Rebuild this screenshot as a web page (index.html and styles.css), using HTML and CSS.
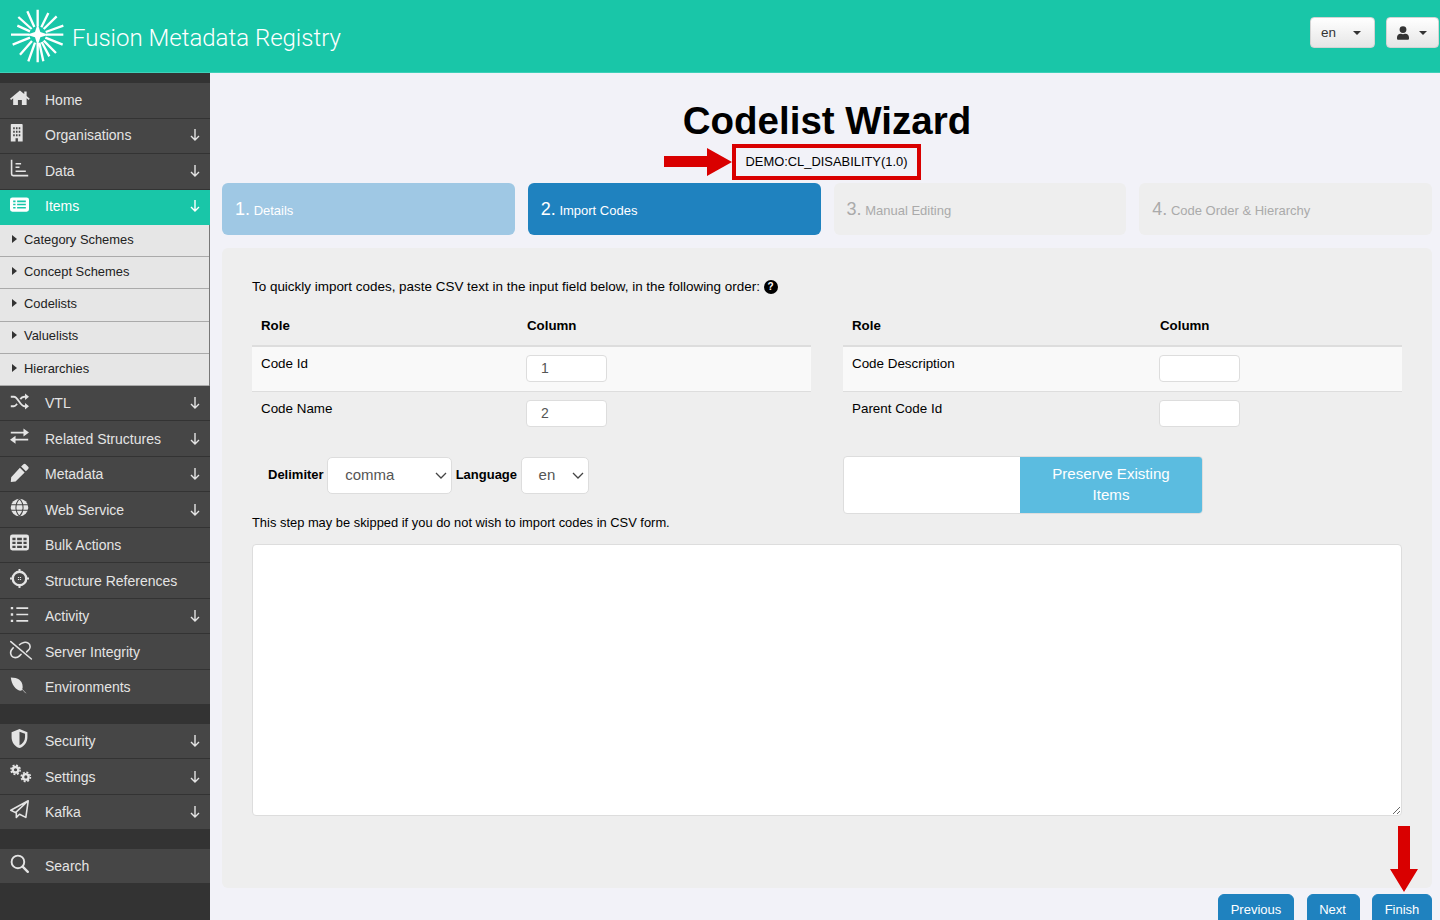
FILE: index.html
```html
<!DOCTYPE html>
<html lang="en">
<head>
<meta charset="utf-8">
<title>Fusion Metadata Registry</title>
<link rel="stylesheet" href="styles.css">
</head>
<body>
<header class="topbar">
  <svg class="logo" viewBox="30 28 165 165" fill="none" stroke="#fff" stroke-width="7">
    <path d="M113 80 113 30M124 83 145 40M131 88 170 50M137 97 190 78M138 105 190 105M136 114 188 135M131 123 168 160M125 127 148 170M118 129 130 185M113 130 113 188M105 129 85 185M96 124 60 165M90 114 38 135M88 105 33 105M90 95 52 78M95 88 55 52M103 82 82 35"/>
    <path d="M113 72 121 97 146 105 121 113 113 138 105 113 80 105 105 97Z" fill="#fff" stroke="none"/>
  </svg>
  <span class="brand">Fusion Metadata Registry</span>
  <div class="top-actions">
    <button class="top-btn lang">en<i class="caret"></i></button>
    <button class="top-btn user">
      <svg class="user-ico" viewBox="0 0 448 512"><path fill="#333" d="M224 256a128 128 0 1 0 0-256 128 128 0 0 0 0 256zm90 32h-17a174 174 0 0 1-146 0h-17C60 288 0 348 0 422v42c0 26 22 48 48 48h352c26 0 48-22 48-48v-42c0-74-60-134-134-134z"/></svg><i class="caret"></i>
    </button>
  </div>
</header>
<div class="layout">
  <nav class="sidebar">
    <a class="nav-row"><svg class="ico" viewBox="0 0 24 24"><path fill="currentColor" d="M12.500 3 0 13.500l1.400 1.600L4 13v8.500h6V15h5v6.500h6V13l2.600 2.100 1.400-1.600L21 10V4.500h-3V7.500z"/></svg><span>Home</span></a>
    <a class="nav-row"><svg class="ico" viewBox="0 0 24 24"><path fill="currentColor" fill-rule="evenodd" d="M2 0h13a1 1 0 0 1 1 1v21h-6v-4H7v4H1V1a1 1 0 0 1 1-1zm2 4v2.500h2V4zm3.500 0v2.500h2V4zM11 4v2.500h2V4zM4 8.500V11h2V8.500zm3.500 0V11h2V8.500zm3.500 0V11h2V8.500zM4 13v2.500h2V13zm3.500 0v2.500h2V13zm3.500 0v2.500h2V13z"/></svg><span>Organisations</span><svg class="arrow" viewBox="0 0 10 12"><path fill="none" stroke="currentColor" stroke-width="1.400" d="M5 0v11M1 7l4 4 4-4"/></svg></a>
    <a class="nav-row"><svg class="ico" viewBox="0 0 24 24"><path fill="none" stroke="currentColor" stroke-width="2" d="M2 1v18a2 2 0 0 0 2 2h19M7 6h7M7 10.500h5M7 15.500h13"/></svg><span>Data</span><svg class="arrow" viewBox="0 0 10 12"><path fill="none" stroke="currentColor" stroke-width="1.400" d="M5 0v11M1 7l4 4 4-4"/></svg></a>
    <a class="nav-row active"><svg class="ico" viewBox="0 0 24 24"><path fill="currentColor" fill-rule="evenodd" d="M3 3h18a3 3 0 0 1 3 3v12a3 3 0 0 1-3 3H3a3 3 0 0 1-3-3V6a3 3 0 0 1 3-3zm1 4v2h3V7zm5 0v2h11V7zm-5 4v2h3v-2zm5 0v2h11v-2zm-5 4v2h3v-2zm5 0v2h11v-2z"/></svg><span>Items</span><svg class="arrow" viewBox="0 0 10 12"><path fill="none" stroke="currentColor" stroke-width="1.400" d="M5 0v11M1 7l4 4 4-4"/></svg></a>
    <div class="submenu">
      <a class="sub-row"><i class="tri"></i>Category Schemes</a>
      <a class="sub-row"><i class="tri"></i>Concept Schemes</a>
      <a class="sub-row"><i class="tri"></i>Codelists</a>
      <a class="sub-row"><i class="tri"></i>Valuelists</a>
      <a class="sub-row"><i class="tri"></i>Hierarchies</a>
    </div>
    <a class="nav-row lower"><svg class="ico" viewBox="0 0 24 24"><path fill="none" stroke="currentColor" stroke-width="2.300" d="M1 6h4c5 0 8 12 13 12h2M1 18h4c2 0 3-2 4-3M13 9c1-1.500 3-3 5-3h2"/><path fill="currentColor" d="M19 2l5 4-5 4zM19 14l5 4-5 4z"/></svg><span>VTL</span><svg class="arrow" viewBox="0 0 10 12"><path fill="none" stroke="currentColor" stroke-width="1.400" d="M5 0v11M1 7l4 4 4-4"/></svg></a>
    <a class="nav-row lower"><svg class="ico" viewBox="0 0 24 24"><path fill="none" stroke="currentColor" stroke-width="2.300" d="M1 7h18M23 16H5"/><path fill="currentColor" d="M17 2l7 5-7 5zM7 11l-7 5 7 5z"/></svg><span>Related Structures</span><svg class="arrow" viewBox="0 0 10 12"><path fill="none" stroke="currentColor" stroke-width="1.400" d="M5 0v11M1 7l4 4 4-4"/></svg></a>
    <a class="nav-row lower"><svg class="ico" viewBox="0 0 24 24"><path fill="currentColor" d="M17 1.500a2 2 0 0 1 2.800 0l3.200 3.200a2 2 0 0 1 0 2.800L20 10.500 14 4.500zM12.500 6l6 6L7 23.500 1 24l.5-6z"/></svg><span>Metadata</span><svg class="arrow" viewBox="0 0 10 12"><path fill="none" stroke="currentColor" stroke-width="1.400" d="M5 0v11M1 7l4 4 4-4"/></svg></a>
    <a class="nav-row lower"><svg class="ico" viewBox="0 0 24 24"><circle cx="12" cy="12" r="11" fill="currentColor"/><path fill="none" stroke="#464646" stroke-width="1.300" d="M1 8.500h22M1 15.500h22M12 1c-6 6-6 16 0 22M12 1c6 6 6 16 0 22"/></svg><span>Web Service</span><svg class="arrow" viewBox="0 0 10 12"><path fill="none" stroke="currentColor" stroke-width="1.400" d="M5 0v11M1 7l4 4 4-4"/></svg></a>
    <a class="nav-row"><svg class="ico" viewBox="0 0 24 24"><path fill="currentColor" fill-rule="evenodd" d="M3 2h18a3 3 0 0 1 3 3v14a3 3 0 0 1-3 3H3a3 3 0 0 1-3-3V5a3 3 0 0 1 3-3zm0 4v3h4V6zm6 0v3h6V6zm8 0v3h4V6zM3 11v3h4v-3zm6 0v3h6v-3zm8 0v3h4v-3zM3 16v3h4v-3zm6 0v3h6v-3zm8 0v3h4v-3z"/></svg><span>Bulk Actions</span></a>
    <a class="nav-row lower"><svg class="ico" viewBox="0 0 24 24"><circle cx="12" cy="12" r="8.500" fill="none" stroke="currentColor" stroke-width="3"/><path fill="none" stroke="currentColor" stroke-width="2.500" d="M12 0v5M12 19v5M0 12h5M19 12h5"/><path fill="currentColor" d="M10 10h1.500v1.500H10zM12.500 10H14v1.500h-1.500zM10 12.500h1.500V14H10zM12.500 12.500H14V14h-1.500z"/></svg><span>Structure References</span></a>
    <a class="nav-row lower"><svg class="ico" viewBox="0 0 24 24"><path fill="none" stroke="currentColor" stroke-width="2.200" d="M8 4h15M8 12h15M8 20h15"/><path fill="currentColor" d="M1 2.500h3v3H1zM1 10.500h3v3H1zM1 18.500h3v3H1z"/></svg><span>Activity</span><svg class="arrow" viewBox="0 0 10 12"><path fill="none" stroke="currentColor" stroke-width="1.400" d="M5 0v11M1 7l4 4 4-4"/></svg></a>
    <a class="nav-row lower"><svg class="ico" viewBox="0 0 24 24"><path fill="none" stroke="currentColor" stroke-width="2" stroke-linecap="round" d="M1 2l26 22M12 6c3-3 8-4 11-2s3 6 1 8l-3 3M4 10c-3 3-4 7-2 10s7 3 10 0l2-2"/></svg><span>Server Integrity</span></a>
    <a class="nav-row"><svg class="ico" viewBox="0 0 24 24"><path fill="currentColor" d="M1 3c9 0 15 4 15 12 0 2-1 4-2 5C7 19 2 12 1 3z"/><path fill="none" stroke="currentColor" stroke-width=".8" d="M5 7l15 16"/></svg><span>Environments</span></a>
    <div class="nav-gap"></div>
    <a class="nav-row"><svg class="ico" viewBox="0 0 24 24"><path fill="currentColor" fill-rule="evenodd" d="M12 0l10 4v6c0 7-4 12-10 14C6 22 2 17 2 10V4zm0 3.500V20.500c4-2 7-5.500 7-10.500V6z"/></svg><span>Security</span><svg class="arrow" viewBox="0 0 10 12"><path fill="none" stroke="currentColor" stroke-width="1.400" d="M5 0v11M1 7l4 4 4-4"/></svg></a>
    <a class="nav-row lower"><svg class="ico" viewBox="0 0 24 24"><g fill="none" stroke="currentColor"><circle cx="7" cy="6" r="3.500" stroke-width="3"/><circle cx="7" cy="6" r="5.800" stroke-width="2" stroke-dasharray="2.500 2.050"/><circle cx="20" cy="15" r="3.500" stroke-width="3"/><circle cx="20" cy="15" r="5.800" stroke-width="2" stroke-dasharray="2.500 2.050"/></g></svg><span>Settings</span><svg class="arrow" viewBox="0 0 10 12"><path fill="none" stroke="currentColor" stroke-width="1.400" d="M5 0v11M1 7l4 4 4-4"/></svg></a>
    <a class="nav-row"><svg class="ico" viewBox="0 0 24 24"><path fill="none" stroke="currentColor" stroke-width="2" stroke-linejoin="round" d="M23 1 1 13l6 3 16-15-3 21-8-4-4 4v-6"/></svg><span>Kafka</span><svg class="arrow" viewBox="0 0 10 12"><path fill="none" stroke="currentColor" stroke-width="1.400" d="M5 0v11M1 7l4 4 4-4"/></svg></a>
    <div class="nav-gap"></div>
    <a class="nav-row"><svg class="ico" viewBox="0 0 24 24"><circle cx="10" cy="10" r="8" fill="none" stroke="currentColor" stroke-width="2.400"/><path stroke="currentColor" stroke-width="3" stroke-linecap="round" d="M16 16l6.500 6.500"/></svg><span>Search</span></a>
  </nav>
  <main class="content">
    <h1 class="title">Codelist Wizard</h1>
    <div class="id-row"><span class="id-box">DEMO:CL_DISABILITY(1.0)</span></div>
    <ol class="steps">
      <li class="step done"><b>1.</b> Details</li>
      <li class="step current"><b>2.</b> Import Codes</li>
      <li class="step"><b>3.</b> Manual Editing</li>
      <li class="step"><b>4.</b> Code Order &amp; Hierarchy</li>
    </ol>
    <section class="panel">
      <p class="intro">To quickly import codes, paste CSV text in the input field below, in the following order: <i class="help">?</i></p>
      <div class="tables">
        <table class="roles">
          <thead><tr><th class="role">Role</th><th>Column</th></tr></thead>
          <tbody>
            <tr class="odd"><td>Code Id</td><td><input class="col-input" value="1"></td></tr>
            <tr><td>Code Name</td><td><input class="col-input" value="2"></td></tr>
          </tbody>
        </table>
        <table class="roles roles-right">
          <thead><tr><th class="role">Role</th><th>Column</th></tr></thead>
          <tbody>
            <tr class="odd"><td>Code Description</td><td><input class="col-input"></td></tr>
            <tr><td>Parent Code Id</td><td><input class="col-input"></td></tr>
          </tbody>
        </table>
      </div>
      <div class="options">
        <div class="selects">
          <label class="sel-label">Delimiter</label>
          <div class="select sel-delim">comma<svg class="chev" viewBox="0 0 12 7"><path fill="none" stroke="#444" stroke-width="1.300" d="M1 1l5 5 5-5"/></svg></div>
          <label class="sel-label">Language</label>
          <div class="select sel-lang">en<svg class="chev" viewBox="0 0 12 7"><path fill="none" stroke="#444" stroke-width="1.300" d="M1 1l5 5 5-5"/></svg></div>
        </div>
        <div class="toggle"><span class="toggle-off"></span><span class="toggle-on">Preserve Existing Items</span></div>
      </div>
      <p class="skip">This step may be skipped if you do not wish to import codes in CSV form.</p>
      <textarea class="csv"></textarea>
    </section>
    <div class="actions">
      <button class="btn btn-prev">Previous</button>
      <button class="btn btn-next">Next</button>
      <button class="btn btn-finish">Finish</button>
    </div>
    <div class="red-arrow-right"></div>
    <div class="red-arrow-down"></div>
  </main>
</div>
</body>
</html>
```
FILE: styles.css
```css
* { box-sizing: border-box; }
html, body { margin: 0; height: 920px; overflow: hidden; }
body { font-family: "Liberation Sans", Arial, sans-serif; background: #f2f2f8; color: #000; font-size: 14px; }
.topbar { height: 73px; background: #19c6a8; border-bottom: 1px solid #3ed0b8; display: flex; align-items: center; color: #fff; padding-left: 10px; }
.logo { width: 55px; height: 55px; flex: none; }
.brand { font-family: Roboto, "Liberation Sans", sans-serif; font-weight: 300; font-size: 24px; margin-left: 7px; margin-top: 3px; }
.top-actions { margin-left: auto; display: flex; gap: 11px; padding-right: 1px; margin-top: -7px; }
.top-btn { height: 31px; border: 1px solid #d4d4d4; border-radius: 4px; background: linear-gradient(#fff, #e6e6e6); font: 13.500px "Liberation Sans", sans-serif; color: #333; display: flex; align-items: center; padding: 0; }
.lang { width: 65px; padding-left: 10px; justify-content: flex-start; }
.lang .caret { margin-left: 17px; }
.user { width: 53px; padding-left: 10px; }
.user-ico { width: 12px; height: 14px; margin-right: 10px; }
.caret { display: inline-block; width: 0; height: 0; border-left: 4px solid transparent; border-right: 4px solid transparent; border-top: 4px solid #333; }

.layout { display: flex; height: 847px; }
.sidebar { width: 210px; flex: none; background: #333; padding-top: 10px; }
.nav-row { display: flex; align-items: center; height: 35.500px; background: #464646; border-bottom: 1px solid #333; color: #e4e4e4; font-size: 14px; padding: 0 10px 1px 10px; position: relative; }
.nav-row.lower { padding-bottom: 0; }
.nav-row span { margin-left: 16px; }
.ico { width: 19px; height: 19px; flex: none; margin-top: -4px; color: #e4e4e4; overflow: visible; }
.arrow { margin-left: auto; width: 10px; height: 12px; flex: none; }
.nav-row.active { background: #19c6a8; color: #fff; border-bottom-color: #19c6a8; }
.active .ico { color: #fff; }
.submenu { background: #e6e6e6; border-right: 1px solid #777; }
.sub-row { display: flex; align-items: center; height: 32.200px; border-bottom: 1px solid #aaa; color: #222; font-size: 12.900px; padding-left: 12px; padding-bottom: 2.500px; }
.tri { width: 0; height: 0; border-top: 4px solid transparent; border-bottom: 4px solid transparent; border-left: 5px solid #333; margin-right: 7px; margin-top: -1px; }
.nav-gap { height: 18.500px; background: #333; }

.content { flex: 1; padding: 0 8px 0 12px; position: relative; min-width: 0; }
.title { margin: 0; text-align: center; font-size: 38.500px; line-height: 44px; padding-top: 26px; font-weight: bold; height: 69px; }
.id-row { display: flex; justify-content: center; height: 41px; padding-right: 1px; }
.id-box { height: 36px; width: 189px; border: 4px solid #d90000; display: flex; align-items: center; justify-content: center; font-size: 12.900px; margin-top: 2px; padding-bottom: 2px; }
.steps { list-style: none; margin: 0; padding: 0; display: grid; grid-template-columns: repeat(4, 1fr); gap: 13px; }
.step { height: 52px; border-radius: 6px; background: #eee; color: #aaa; font-size: 13px; display: flex; align-items: center; padding-left: 13px; white-space: pre; padding-top: 2px; }
.step b { font-weight: normal; font-size: 18px; margin-top: -2px; }
.step.done { background: #9fc8e4; color: #fff; }
.step.current { background: #1f82bf; color: #fff; }
.panel { margin-top: 13px; height: 640px; background: #eee; border-radius: 6px; padding: 30px 30px 0; }
.intro { margin: 0; font-size: 13.450px; height: 17px; line-height: 17px; display: flex; align-items: center; white-space: pre; }
.help { width: 14px; height: 14px; background: #000; color: #fff; border-radius: 50%; font: bold 10px/14px "Liberation Sans", sans-serif; text-align: center; }
.tables { display: flex; justify-content: space-between; margin-top: 13px; }
.roles { width: 559px; border-collapse: collapse; font-size: 13.400px; table-layout: fixed; }
.roles th { text-align: left; height: 38px; padding: 0 9px 2px; border-bottom: 2px solid #ddd; font-size: 13.300px; }
.roles .role { width: 266px; }
.roles-right .role { width: 308px; }
.roles td { height: 45px; padding: 0 9px 10px; vertical-align: middle; }
.roles td + td { padding: 0 0 0 8px; vertical-align: middle; }
.roles .odd td { background: #f9f9f9; border-bottom: 1px solid #ddd; }
.col-input { width: 81px; height: 27px; border: 1px solid #ddd; border-radius: 4px; background: #fff; padding: 0 14px 2px; font: 14px "Liberation Sans", sans-serif; color: #555; display: block; }
.options { display: flex; margin-top: 21px; height: 58px; }
.selects { width: 591px; display: flex; align-items: flex-start; padding-left: 16px; gap: 3.500px; }
.sel-label { font-weight: bold; font-size: 13px; line-height: 35px; }
.select { height: 36.500px; background: #fff; border: 1px solid #ddd; border-radius: 5px; font-size: 15px; color: #555; display: flex; align-items: center; padding: 0 0 2px 17px; position: relative; }
.sel-delim { width: 125px; }
.sel-lang { width: 68px; }
.chev { position: absolute; right: 4px; top: 14px; width: 12px; height: 7px; }
.toggle { width: 360px; height: 58px; margin-top: -1px; display: flex; border: 1px solid #ddd; border-radius: 4px; background: #fff; overflow: hidden; }
.toggle-off { width: 176px; }
.toggle-on { flex: 1; background: #5bbce0; color: #fff; font-size: 15.100px; line-height: 21px; text-align: center; display: flex; align-items: center; padding: 0 20px 2px; }
.skip { margin: 0; font-size: 12.900px; line-height: 16px; height: 29px; }
.csv { display: block; width: 1150px; height: 272px; background: #fff; border: 1px solid #ddd; border-radius: 4px; }
.actions { display: flex; justify-content: flex-end; gap: 13px; margin-top: 6px; }
.btn { height: 40px; background: #1f82bf; color: #fff; border: 1px solid #1f82bf; border-radius: 6px; font: 13px "Liberation Sans", sans-serif; padding: 0 0 10px; }
.btn-prev { width: 76px; }
.btn-next { width: 53px; margin-right: -1px; padding-right: 2px; }
.btn-finish { width: 60px; }
.red-arrow-right { position: absolute; left: 454px; top: 75px; width: 68px; height: 28px; background: #d90000; clip-path: polygon(0 8px, 43px 8px, 43px 0, 68px 14px, 43px 28px, 43px 19px, 0 19px); }
.red-arrow-down { position: absolute; left: 1180px; top: 753px; width: 28px; height: 66px; background: #d90000; clip-path: polygon(8px 0, 20px 0, 20px 43px, 28px 43px, 14px 66px, 0 43px, 8px 43px); }
```
